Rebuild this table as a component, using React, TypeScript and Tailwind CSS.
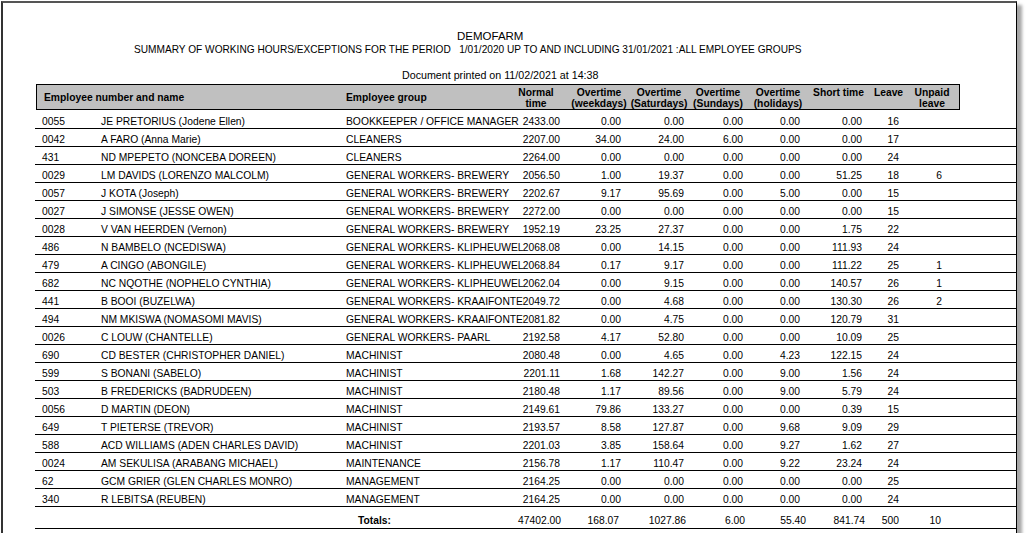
const rows: string[][] = [
  ["0055", "JE PRETORIUS (Jodene Ellen)", "BOOKKEEPER / OFFICE MANAGER", "2433.00", "0.00", "0.00", "0.00", "0.00", "0.00", "16", ""],
  ["0042", "A FARO (Anna Marie)", "CLEANERS", "2207.00", "34.00", "24.00", "6.00", "0.00", "0.00", "17", ""],
  ["431", "ND MPEPETO (NONCEBA DOREEN)", "CLEANERS", "2264.00", "0.00", "0.00", "0.00", "0.00", "0.00", "24", ""],
  ["0029", "LM DAVIDS (LORENZO MALCOLM)", "GENERAL WORKERS- BREWERY", "2056.50", "1.00", "19.37", "0.00", "0.00", "51.25", "18", "6"],
  ["0057", "J KOTA (Joseph)", "GENERAL WORKERS- BREWERY", "2202.67", "9.17", "95.69", "0.00", "5.00", "0.00", "15", ""],
  ["0027", "J SIMONSE (JESSE OWEN)", "GENERAL WORKERS- BREWERY", "2272.00", "0.00", "0.00", "0.00", "0.00", "0.00", "15", ""],
  ["0028", "V VAN HEERDEN (Vernon)", "GENERAL WORKERS- BREWERY", "1952.19", "23.25", "27.37", "0.00", "0.00", "1.75", "22", ""],
  ["486", "N BAMBELO (NCEDISWA)", "GENERAL WORKERS- KLIPHEUWEL", "2068.08", "0.00", "14.15", "0.00", "0.00", "111.93", "24", ""],
  ["479", "A CINGO (ABONGILE)", "GENERAL WORKERS- KLIPHEUWEL", "2068.84", "0.17", "9.17", "0.00", "0.00", "111.22", "25", "1"],
  ["682", "NC NQOTHE (NOPHELO CYNTHIA)", "GENERAL WORKERS- KLIPHEUWEL", "2062.04", "0.00", "9.15", "0.00", "0.00", "140.57", "26", "1"],
  ["441", "B BOOI (BUZELWA)", "GENERAL WORKERS- KRAAIFONTEIN", "2049.72", "0.00", "4.68", "0.00", "0.00", "130.30", "26", "2"],
  ["494", "NM MKISWA (NOMASOMI MAVIS)", "GENERAL WORKERS- KRAAIFONTEIN", "2081.82", "0.00", "4.75", "0.00", "0.00", "120.79", "31", ""],
  ["0026", "C LOUW (CHANTELLE)", "GENERAL WORKERS- PAARL", "2192.58", "4.17", "52.80", "0.00", "0.00", "10.09", "25", ""],
  ["690", "CD BESTER (CHRISTOPHER DANIEL)", "MACHINIST", "2080.48", "0.00", "4.65", "0.00", "4.23", "122.15", "24", ""],
  ["599", "S BONANI (SABELO)", "MACHINIST", "2201.11", "1.68", "142.27", "0.00", "9.00", "1.56", "24", ""],
  ["503", "B FREDERICKS (BADRUDEEN)", "MACHINIST", "2180.48", "1.17", "89.56", "0.00", "9.00", "5.79", "24", ""],
  ["0056", "D MARTIN (DEON)", "MACHINIST", "2149.61", "79.86", "133.27", "0.00", "0.00", "0.39", "15", ""],
  ["649", "T PIETERSE (TREVOR)", "MACHINIST", "2193.57", "8.58", "127.87", "0.00", "9.68", "9.09", "29", ""],
  ["588", "ACD WILLIAMS (ADEN CHARLES DAVID)", "MACHINIST", "2201.03", "3.85", "158.64", "0.00", "9.27", "1.62", "27", ""],
  ["0024", "AM SEKULISA (ARABANG MICHAEL)", "MAINTENANCE", "2156.78", "1.17", "110.47", "0.00", "9.22", "23.24", "24", ""],
  ["62", "GCM GRIER (GLEN CHARLES MONRO)", "MANAGEMENT", "2164.25", "0.00", "0.00", "0.00", "0.00", "0.00", "25", ""],
  ["340", "R LEBITSA (REUBEN)", "MANAGEMENT", "2164.25", "0.00", "0.00", "0.00", "0.00", "0.00", "24", ""],
];

const totals = ["47402.00", "168.07", "1027.86", "6.00", "55.40", "841.74", "500", "10"];

function HeaderCell({ top, bottom }: { top: string; bottom?: string }) {
  return (
    <div className="flex flex-col items-center whitespace-nowrap pt-[2px]">
      <span>{top}</span>
      {bottom && <span>{bottom}</span>}
    </div>
  );
}

export default function App() {
  return (
    <div className="min-h-screen bg-white pl-[1px] pt-[1px] font-['Liberation_Sans',Arial,sans-serif] text-[10.3px] text-black">
      <div className="h-[540px] w-[1016px] border-t-2 border-r border-l-2 border-t-[#555] border-r-black border-l-[#333] bg-white shadow-[5px_4px_3px_rgba(0,0,0,0.35)]">
        {/* report title */}
        <div className="pt-[27px]">
          <div className="ml-[454px] text-[11.5px] leading-[13px] whitespace-nowrap">DEMOFARM</div>
          <div className="ml-[131px] mt-[1px] text-[10.15px] leading-[12px] whitespace-pre">
            SUMMARY OF WORKING HOURS/EXCEPTIONS FOR THE PERIOD   1/01/2020 UP TO AND INCLUDING 31/01/2021 :ALL EMPLOYEE GROUPS
          </div>
          <div className="ml-[399px] mt-[13px] text-[10.7px] leading-[12px] whitespace-nowrap">
            Document printed on 11/02/2021 at 14:38
          </div>
        </div>

        {/* table */}
        <div className="ml-[32px] mt-[3px]">
          <div className="ml-[1px] grid h-[26px] w-[924px] grid-cols-[309px_158px_64px_62px_58px_60px_60px_61px_39px_48px_1fr] border border-black bg-[#c0c0c0] font-bold leading-[11px]">
            <div className="flex items-center pl-[7px] whitespace-nowrap">Employee number and name</div>
            <div className="flex items-center whitespace-nowrap">Employee group</div>
            <HeaderCell top="Normal" bottom="time" />
            <HeaderCell top="Overtime" bottom="(weekdays)" />
            <HeaderCell top="Overtime" bottom="(Saturdays)" />
            <HeaderCell top="Overtime" bottom="(Sundays)" />
            <HeaderCell top="Overtime" bottom="(holidays)" />
            <HeaderCell top="Short time" />
            <HeaderCell top="Leave" />
            <HeaderCell top="Unpaid" bottom="leave" />
            <div />
          </div>

          <div className="mt-[1px]">
            {rows.map((r) => (
              <div
                key={r[0] + r[1]}
                className="grid h-[18px] grid-cols-[66px_245px_154px_60px_61px_63px_59px_57px_62px_37px_43px_1fr] border-b border-black pt-[5px] leading-[11px] whitespace-nowrap"
              >
                <div className="pl-[7px]">{r[0]}</div>
                <div>{r[1]}</div>
                <div>
                  <div className="w-[178px] overflow-hidden">{r[2]}</div>
                </div>
                <div className="text-right">{r[3]}</div>
                <div className="text-right">{r[4]}</div>
                <div className="text-right">{r[5]}</div>
                <div className="text-right">{r[6]}</div>
                <div className="text-right">{r[7]}</div>
                <div className="text-right">{r[8]}</div>
                <div className="text-right">{r[9]}</div>
                <div className="text-right">{r[10]}</div>
                <div />
              </div>
            ))}

            <div className="grid h-[22px] grid-cols-[323px_142px_61px_58px_67px_59px_61px_59px_34px_42px_1fr] border-b border-black pt-[8px] leading-[11px] whitespace-nowrap">
              <div />
              <div className="font-bold">Totals:</div>
              {totals.map((t, i) => (
                <div key={i} className="text-right">
                  {t}
                </div>
              ))}
              <div />
            </div>
          </div>
        </div>
      </div>
    </div>
  );
}
